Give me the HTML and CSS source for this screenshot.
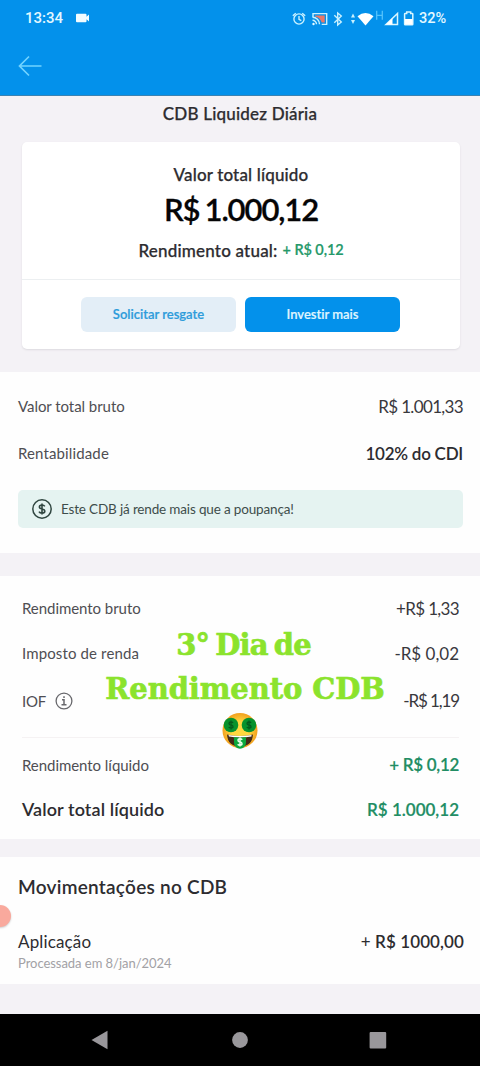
FILE: index.html
```html
<!DOCTYPE html>
<html lang="pt-BR">
<head>
<meta charset="utf-8">
<title>CDB Liquidez Diária</title>
<link rel="stylesheet" href="styles.css">
</head>
<body>
<div class="screen">
  <header class="header">
    <div class="status">
      <span class="clock">13:34</span>
      <svg class="camera" width="14" height="10" viewBox="0 0 14 10"><path d="M1 .7h8.500q1 0 1 1v2L13 1.500v7l-2.500-2.200v2q0 1-1 1H1q-1 0-1-1V1.700q0-1 1-1z" fill="#f2fcff"/></svg>
      <svg class="indicators" width="124" height="20" viewBox="0 0 124 20">
        <g fill="none" stroke="#c9f1ff" stroke-width="1.400">
          <circle cx="8" cy="11" r="5.100"/><path d="M8 8v3.300l2.300 1.300M1.800 7.800l3-2.600M14.200 7.800l-3-2.600"/>
          <path d="M22 9V5.600h13.700v10.800h-5"/>
          <path d="M21.500 9.300a7 7 0 0 1 7 7M21.500 12.300a4 4 0 0 1 4 4"/>
          <path d="M43.300 7.200l7 6.800-3.600 3V5l3.600 3-7 6.800"/>
        </g>
        <path d="M24 7.600h9.700v6.800h-3a9 9 0 0 0-6.700-6z" fill="#e87868"/>
        <circle cx="22.500" cy="16" r="1.200" fill="#e6faff"/>
        <path d="M60 9.500l2-4 2 4zM60 12h4l-2 4z" fill="#c9f1ff"/>
        <path d="M66.500 8.300q8-6.500 16 0l-8 9.200z" fill="#fff"/>
        <path d="M85.700 2.800v9M91.300 2.800v9M85.700 7.300h5.600" stroke="#54c2fb" stroke-width="1.300" fill="none"/>
        <path d="M106.500 5.500v11H95z" fill="none" stroke="#d9f6ff" stroke-width="1.500"/>
        <path d="M101.500 10v6.500h-6.500z" fill="#fff"/>
        <path d="M115.700 5.500V4h4v1.500h1.500q.6 0 .6.600v10.100q0 .6-.6.600h-7q-.6 0-.6-.6V6.100q0-.6.600-.6z" fill="none" stroke="#d9f6ff" stroke-width="1.500"/>
        <path d="M114 11h7.500v5.500H114z" fill="#fff"/>
      </svg>
      <span class="battery">32%</span>
    </div>
    <svg class="back" width="24" height="22" viewBox="0 0 24 22"><path d="M23.500 11H1.500M11 1.500L1.500 11 11 20.500" fill="none" stroke="#72d3ff" stroke-width="1.700"/></svg>
  </header>

  <main class="content">
    <h1 class="title">CDB Liquidez Diária</h1>
    <section class="card">
      <div class="summary">
        <div class="summary-label">Valor total líquido</div>
        <div class="summary-value">R$ 1.000,12</div>
        <div class="summary-yield"><span class="yield-label">Rendimento atual:</span><span class="yield-value">+ R$ 0,12</span></div>
      </div>
      <div class="actions">
        <button class="btn btn-light">Solicitar resgate</button>
        <button class="btn btn-primary">Investir mais</button>
      </div>
    </section>

    <section class="panel gross">
      <div class="row r1"><span class="label">Valor total bruto</span><span class="value tight">R$ 1.001,33</span></div>
      <div class="row r2"><span class="label rent">Rentabilidade</span><span class="value strong rate">102% do CDI</span></div>
      <div class="note">
        <svg width="20" height="20" viewBox="0 0 20 20" fill="none" stroke="#304640"><circle cx="10" cy="10" r="9.200" stroke-width="1.500"/><path d="M12.800 7.400Q12 6 10 6 7.400 6 7.400 7.900q0 1.600 2.600 2.100 2.800.5 2.800 2.200 0 1.900-2.800 1.900-2.200 0-3-1.500M10 4.400v11.200" stroke-width="1.600"/></svg>
        <span class="note-text">Este CDB já rende mais que a poupança!</span>
      </div>
    </section>

    <section class="panel detail">
      <div class="row d1"><span class="label">Rendimento bruto</span><span class="value tight">+R$ 1,33</span></div>
      <div class="row d2"><span class="label tax">Imposto de renda</span><span class="value">-R$ 0,02</span></div>
      <div class="row d3"><span class="label iof">IOF <svg width="18" height="18" viewBox="0 0 18 18" fill="none" stroke="#68686c"><circle cx="9" cy="9" r="7.900" stroke-width="1.300"/><path d="M7 7.700h2v5M6.500 12.700h5M9 4.200v1.900" stroke-width="1.500"/></svg></span><span class="value tighter">-R$ 1,19</span></div>
      <div class="rule"></div>
      <div class="row d4"><span class="label">Rendimento líquido</span><span class="value green gain">+ R$ 0,12</span></div>
      <div class="row d5"><span class="total-label">Valor total líquido</span><span class="value green">R$ 1.000,12</span></div>
      <div class="caption">
        <div class="caption-a">3° Dia de</div>
        <div class="caption-b">Rendimento CDB</div>
        <svg class="emoji" width="36" height="36" viewBox="0 0 36 36">
          <defs><radialGradient id="face"><stop offset=".5" stop-color="#ffd83f"/><stop offset="1" stop-color="#f2a11f"/></radialGradient></defs>
          <circle cx="18" cy="17.500" r="17.500" fill="url(#face)"/>
          <path d="M5 21.500q13 3 26 0-.8 12-13 12T5 21.500z" fill="#442a17"/>
          <path d="M6.500 22q11.500 2.200 23 0v1.500q-11.500 2.200-22.500 0z" fill="#fff"/>
          <path d="M12 24q6 1.500 12 0v5.800a6 6 0 0 1-12 0z" fill="#0ba83c"/>
          <circle cx="9" cy="12" r="7.300" fill="#07922d"/><circle cx="27" cy="12" r="7.300" fill="#07922d"/>
          <g fill="none" stroke="#045a1c" stroke-width="1.300"><path d="M11 10Q10.500 9 9 9q-2 0-2 1.400T9 12q2 .3 2 1.700T9 15q-1.600 0-2.200-1M9 7.500v9"/><path d="M29 10Q28.500 9 27 9q-2 0-2 1.400t2 1.600q2 .3 2 1.700T27 15q-1.600 0-2.200-1M27 7.500v9"/></g>
          <path d="M20.200 26.700q-.7-1-2.200-1-2 0-2 1.500t2 1.700q2 .3 2 1.800T18 32.200q-1.600 0-2.300-1M18 24.500v9" fill="none" stroke="#e9ffe9" stroke-width="1.500"/>
        </svg>
      </div>
    </section>

    <section class="panel moves">
      <h2 class="moves-title">Movimentações no CDB</h2>
      <div class="move">
        <div class="move-info"><div class="move-name">Aplicação</div><div class="move-date">Processada em 8/jan/2024</div></div>
        <div class="move-value"><span class="plus">+</span> R$ 1000,00</div>
      </div>
      <div class="bubble"></div>
    </section>
  </main>

  <nav class="nav">
    <svg width="480" height="52" viewBox="0 0 480 52" fill="#99979b"><path d="M91.500 26L107.500 16.800v18.400z"/><circle cx="240" cy="26" r="7.900"/><rect x="369.600" y="18" width="16.600" height="16.500" rx="1"/></svg>
  </nav>
</div>
</body>
</html>
```

FILE: styles.css
```css
* { box-sizing: border-box; }
body { margin: 0; background: #f4f2f6; font-family: Lato, "Open Sans", sans-serif; font-variant-ligatures: none; color: #2d2c30; }
.screen { width: 480px; height: 1066px; display: flex; flex-direction: column; overflow: hidden; white-space: nowrap; }
.header { height: 96px; flex: none; background: #0391eb; border-bottom: 1px solid #3b83b3; }
.status { display: flex; align-items: center; height: 36px; padding-left: 25px; font: 500 15px Roboto, sans-serif; color: #e3f8ff; }
.clock { width: 38px; margin-right: 13px; }
.camera { margin-right: 201px; }
.indicators { margin-top: -1px; }
.battery { margin-left: 4px; font-size: 14.500px; }
.back { display: block; margin: 19px 0 0 18px; }
.content { flex: 1; }
.title { margin: 0; height: 46px; line-height: 35px; text-align: center; font-size: 17px; font-weight: 500; letter-spacing: .2px; -webkit-text-stroke: .25px; }
.card { margin: 0 20px 0 22px; height: 207px; background: #fff; border-radius: 5px; box-shadow: 0 1px 2px #dcdadf; }
.summary { height: 138px; border-bottom: 1px solid #eceff1; text-align: center; padding-top: 21px; }
.summary-label { font-size: 17px; line-height: 24px; font-weight: 500; letter-spacing: .15px; -webkit-text-stroke: .25px; }
.summary-value { font-size: 31px; line-height: 44px; font-weight: 600; letter-spacing: -1.1px; word-spacing: -1.500px; color: #050506; -webkit-text-stroke: .3px; }
.summary-yield { display: flex; justify-content: center; gap: 5px; line-height: 39px; }
.yield-label { font-size: 17px; font-weight: 500; letter-spacing: .2px; -webkit-text-stroke: .25px; }
.yield-value { font-size: 14.500px; font-weight: 600; letter-spacing: -.1px; color: #25996a; -webkit-text-stroke: .2px; line-height: 38px; }
.actions { display: flex; justify-content: center; gap: 9px; padding: 17px 1px 0 0; }
.btn { width: 155px; height: 35px; border: 0; border-radius: 6px; padding: 0 0 1px; font: 600 13px Lato, sans-serif; font-variant-ligatures: none; -webkit-text-stroke: .2px; }
.btn-light { background: #e3eef7; color: #2e9cdb; }
.btn-primary { background: #0391eb; color: #dff5ff; }
.panel { background: #fefefe; }
.gross { margin-top: 23px; height: 181px; padding: 12px 17px 0 18px; }
.row { display: flex; align-items: center; justify-content: space-between; height: 46px; }
.r1 { padding-bottom: 2px; }
.label { font-size: 15px; letter-spacing: -.05px; color: #4f4e53; }
.rent, .tax { letter-spacing: .13px; }
.value { font-size: 17px; color: #39383d; }
.tight { letter-spacing: -.65px; }
.tighter { letter-spacing: -1.100px; }
.rate { letter-spacing: -.25px; }
.gain { letter-spacing: -.3px; }
.strong { font-weight: 600; color: #2d2c30; }
.green { font-weight: 600; color: #218d64; -webkit-text-stroke: .15px; }
.note { display: flex; align-items: center; gap: 9px; height: 38px; margin-top: 14px; padding-left: 14px; background: #e5f3f1; border-radius: 5px; }
.note-text { font-size: 13.500px; letter-spacing: -.16px; color: #3e4d4b; }
.detail { position: relative; margin-top: 23px; height: 263px; padding: 9px 21px 0 22px; }
.d2 { height: 44px; }
.d3 { height: 51px; }
.iof { display: flex; align-items: center; gap: 9px; letter-spacing: -.2px; }
.rule { height: 1px; background: #f5f2f3; margin-top: 11px; }
.d4 { height: 45px; margin-top: 4px; }
.d5 { height: 44px; }
.total-label { font-size: 18px; font-weight: 600; letter-spacing: .1px; }
.caption { position: absolute; left: 95px; top: 47px; width: 300px; display: flex; flex-direction: column; align-items: center; color: #8be32d; font: bold 29px "DejaVu Serif", serif; line-height: 44px; -webkit-text-stroke: .7px; }
.caption-a { margin-left: -3px; letter-spacing: -.9px; word-spacing: -3px; }
.caption-b { letter-spacing: -.1px; }
.emoji { margin: 2px 10px 0 0; }
.moves { position: relative; margin-top: 18px; height: 127px; padding: 14px 16px 0 18px; }
.moves-title { margin: 0; font-size: 19px; line-height: 31px; font-weight: 600; letter-spacing: .25px; }
.move { display: flex; justify-content: space-between; margin-top: 28px; }
.move-name { font-size: 17px; line-height: 24px; letter-spacing: .15px; }
.move-date { font-size: 13px; line-height: 19px; letter-spacing: -.04px; color: #a2a1a5; }
.move-value { font-size: 17px; line-height: 24px; font-weight: 600; letter-spacing: .1px; }
.plus { font-weight: 400; }
.bubble { position: absolute; left: -11px; top: 48px; width: 22px; height: 22px; border-radius: 50%; background: #f9a99d; box-shadow: 0 1px 2px #ccc; }
.nav { height: 52px; flex: none; background: #000; }
.nav svg { display: block; }
```
